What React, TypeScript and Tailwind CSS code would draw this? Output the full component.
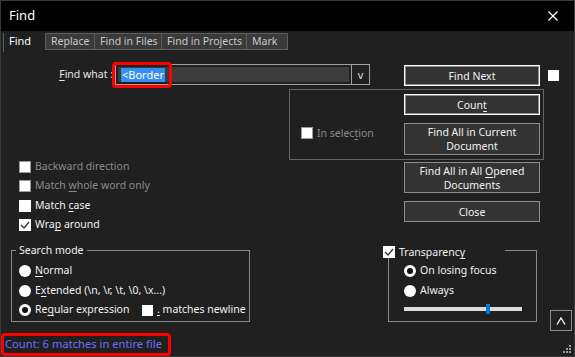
import React from "react";

const FONT = { fontFamily: '"Noto Sans", "Open Sans", sans-serif' };

function U({ children }: { children: React.ReactNode }) {
  return <span className="underline underline-offset-2 decoration-1">{children}</span>;
}

function Check({ checked = false, disabled = false }: { checked?: boolean; disabled?: boolean }) {
  return (
    <span
      className={
        "w-[12px] h-[12px] shrink-0 bg-white border flex items-center justify-center " +
        (disabled ? "border-[#9a9a9a] bg-[#f0f0f0]" : "border-white")
      }
    >
      {checked && (
        <svg width="10" height="10" viewBox="0 0 10 10">
          <polyline points="1,5 4,8 9,2" fill="none" stroke="#333" strokeWidth="1.3" />
        </svg>
      )}
    </span>
  );
}

function Radio({ selected = false }: { selected?: boolean }) {
  return selected ? (
    <span className="w-[12px] h-[12px] shrink-0 rounded-full border-[3px] border-white bg-[#111]" />
  ) : (
    <span className="w-[12px] h-[12px] shrink-0 rounded-full bg-white" />
  );
}

function Btn({
  children,
  focus = false,
  className = "",
}: {
  children: React.ReactNode;
  focus?: boolean;
  className?: string;
}) {
  return (
    <div
      className={
        "w-[136px] flex items-center justify-center text-center leading-[14px] text-[#f2f2f2] bg-[#333333] border whitespace-nowrap " +
        (focus ? "border-white shadow-[inset_0_0_0_1px_#8a8a8a]" : "border-[#8c8c8c]") +
        " " +
        className
      }
    >
      {children}
    </div>
  );
}

export default function App() {
  return (
    <div
      className="w-[575px] h-[357px] bg-[#202020] border border-[#3a3a3a] flex flex-col text-[10.5px] text-white overflow-hidden relative whitespace-nowrap"
      style={FONT}
    >
      {/* Title bar */}
      <div className="h-[30px] bg-black flex items-center justify-between pl-[8px] pr-[16px] shrink-0">
        <span className="text-[13px] text-white">Find</span>
        <svg width="10" height="10" viewBox="0 0 10 10">
          <line x1="0.5" y1="0.5" x2="9.5" y2="9.5" stroke="#fff" strokeWidth="1.2" />
          <line x1="9.5" y1="0.5" x2="0.5" y2="9.5" stroke="#fff" strokeWidth="1.2" />
        </svg>
      </div>

      {/* Tabs */}
      <div className="mt-[2px] h-[17px] flex pl-[2px] shrink-0 text-[10.5px]">
        <div className="w-[42px] h-[19px] border-l border-[#5e5e5e] pl-[5px] leading-[15px] text-white text-[11px]">Find</div>
        {[
          ["Replace", "w-[50px]"],
          ["Find in Files", "w-[67px]"],
          ["Find in Projects", "w-[85px]"],
          ["Mark", "w-[41px]"],
        ].map(([t, w], i) => (
          <div
            key={t}
            className={
              w +
              " h-[17px] bg-[#3a3a3a] border-y border-r border-[#5e5e5e] text-[#c8c8c8] pl-[5px] leading-[15px] " +
              (i === 0 ? "border-l" : "")
            }
          >
            {t}
          </div>
        ))}
      </div>

      {/* Row 1: Find what */}
      <div className="mt-[14px] h-[22px] flex shrink-0">
        <div className="w-[113px] text-right text-[#e6e6e6] leading-[21px] pr-[1px]">
          <U>F</U>ind what :
        </div>
        <div className="ml-[1px] w-[255px] h-[21px] border border-[#a0a0a0] flex relative">
          <div className="flex-1 m-[2px] bg-[#3c3c3c] flex items-center pl-[3px]">
            <span className="bg-[#3390f0] text-white leading-[14px] px-[1px] text-[11px]">&lt;Border</span>
          </div>
          <div className="w-[18px] border-l border-[#a0a0a0] flex items-center justify-center text-[#dcdcdc] text-[11px] leading-none">
            v
          </div>
          <div className="absolute left-[-4px] top-[-3px] w-[60px] h-[26px] border-[3px] border-[#ff0000] rounded-[4px]" />
        </div>
        <Btn focus className="ml-[34px] h-[21px] mt-[1px]">Find Next</Btn>
        <span className="ml-[8px] mt-[6px] w-[11px] h-[11px] bg-white" />
      </div>

      {/* Row 2: In selection group */}
      <div className="mt-[3px] ml-[288px] w-[255px] h-[71px] border border-[#646464] flex shrink-0">
        <div className="w-[114px] pl-[11px] pt-[37px]">
          <div className="flex items-center gap-[4px] text-[#8a8a8a]">
            <Check disabled />
            <span className="leading-[12px]">
              In selec<U>t</U>ion
            </span>
          </div>
        </div>
        <div className="flex flex-col pt-[4px]">
          <Btn focus className="h-[21px]">
            <span>
              Coun<U>t</U>
            </span>
          </Btn>
          <Btn className="h-[32px] mt-[8px]">
            Find All in Current
            <br />
            Document
          </Btn>
        </div>
      </div>

      {/* Row 3: options + buttons */}
      <div className="mt-[-3px] h-[78px] flex shrink-0">
        <div className="w-[403px] pl-[18px] flex flex-col">
          <div className="h-[19px] flex items-center gap-[4px] text-[#8a8a8a]">
            <Check disabled />
            <span>Backward direction</span>
          </div>
          <div className="h-[20px] flex items-center gap-[4px] text-[#8a8a8a]">
            <Check disabled />
            <span>
              Match <U>w</U>hole word only
            </span>
          </div>
          <div className="h-[19px] flex items-center gap-[4px] text-[#f0f0f0]">
            <Check />
            <span>
              Match <U>c</U>ase
            </span>
          </div>
          <div className="h-[20px] flex items-center gap-[4px] text-[#f0f0f0]">
            <Check checked />
            <span>
              Wra<U>p</U> around
            </span>
          </div>
        </div>
        <div className="flex flex-col">
          <Btn className="h-[31px] mt-[5px]">
            <span>
              Find All in All <U>O</U>pened
              <br />
              Documents
            </span>
          </Btn>
          <Btn className="h-[21px] mt-[8px]">Close</Btn>
        </div>
      </div>

      {/* Row 4: search mode + transparency */}
      <div className="mt-[15px] h-[72px] flex items-start shrink-0">
        <div className="ml-[10px] w-[239px] h-[72px] border border-[#8a8a8a] relative flex flex-col pl-[7px] pt-[10px] text-[#f0f0f0]">
          <span className="absolute left-[4px] top-[-9px] bg-[#202020] px-[3px] leading-[16px]">Search mode</span>
          <div className="h-[20px] flex items-center gap-[4px]">
            <Radio />
            <span>
              <U>N</U>ormal
            </span>
          </div>
          <div className="h-[19px] flex items-center gap-[4px]">
            <Radio />
            <span>
              E<U>x</U>tended (\n, \r, \t, \0, \x...)
            </span>
          </div>
          <div className="h-[20px] flex items-center">
            <Radio selected />
            <span className="ml-[4px] w-[107px] shrink-0">
              Re<U>g</U>ular expression
            </span>
            <span className="w-[11px] h-[11px] bg-white shrink-0" />
            <span className="ml-[4px]">
              <U>.</U> matches newline
            </span>
          </div>
        </div>
        <div className="ml-[138px] w-[149px] h-[72px] border border-[#8a8a8a] relative flex flex-col pl-[15px] pt-[10px] text-[#f0f0f0]">
          <div className="absolute left-[-6px] top-[-5px] bg-[#202020] pr-[40px] flex items-center gap-[4px]">
            <Check checked />
            <span className="leading-[12px]">
              Transparenc<U>y</U>
            </span>
          </div>
          <div className="h-[20px] flex items-center gap-[4px]">
            <Radio selected />
            <span>On losing focus</span>
          </div>
          <div className="h-[20px] flex items-center gap-[4px]">
            <Radio />
            <span>Always</span>
          </div>
          <div className="mt-[3px] w-[118px] h-[10px] flex items-center relative">
            <div className="w-full h-[4px] bg-[#dcdcdc]" />
            <div className="absolute left-[82px] top-0 w-[4px] h-[10px] bg-[#0078d7]" />
          </div>
        </div>
        <div className="ml-[13px] mt-[60px] w-[22px] h-[21px] border border-[#8c8c8c] flex items-center justify-center shrink-0">
          <svg width="10" height="8" viewBox="0 0 10 8">
            <polyline points="1,7.5 5,1 9,7.5" fill="none" stroke="#fff" strokeWidth="1.3" />
          </svg>
        </div>
      </div>

      {/* Row 5: status */}
      <div className="mt-[13px] pl-[3px] flex shrink-0">
        <div className="relative text-[#6e6eff] leading-[18px] px-[1px] text-[11.2px]">
          Count: 6 matches in entire file
          <div className="absolute left-[-3px] top-[-2px] w-[170px] h-[23px] border-[3px] border-[#ff0000] rounded-[4px]" />
        </div>
      </div>

      {/* resize grip */}
      <svg className="absolute right-[2px] bottom-[2px]" width="10" height="10" viewBox="0 0 10 10">
        <rect x="7" y="1" width="2" height="2" fill="#9a9a9a" />
        <rect x="4" y="4" width="2" height="2" fill="#9a9a9a" />
        <rect x="7" y="4" width="2" height="2" fill="#9a9a9a" />
        <rect x="1" y="7" width="2" height="2" fill="#9a9a9a" />
        <rect x="4" y="7" width="2" height="2" fill="#9a9a9a" />
        <rect x="7" y="7" width="2" height="2" fill="#9a9a9a" />
      </svg>
    </div>
  );
}
